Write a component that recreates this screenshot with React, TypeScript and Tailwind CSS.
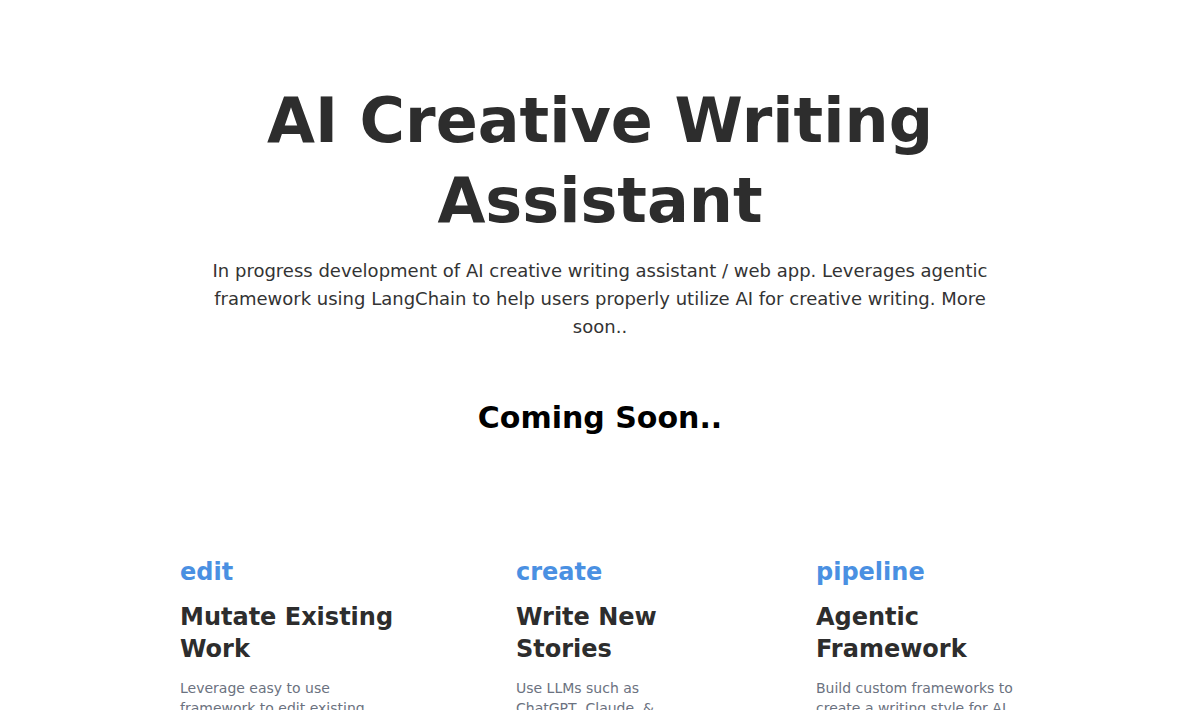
import React from "react";

const cols = [
  {
    label: "edit",
    title: "Mutate Existing Work",
    desc: "Leverage easy to use framework to edit existing work with AI assistance.",
    w: "w-[220px]",
  },
  {
    label: "create",
    title: "Write New Stories",
    desc: "Use LLMs such as ChatGPT, Claude, & Gemini to write brand new stories.",
    w: "w-[184px]",
  },
  {
    label: "pipeline",
    title: "Agentic Framework",
    desc: "Build custom frameworks to create a writing style for AI agents to follow.",
    w: "w-[204px]",
  },
];

export default function App() {
  return (
    <div
      className="min-h-screen bg-white flex flex-col items-center"
      style={{ fontFamily: '"DejaVu Sans", sans-serif' }}
    >
      <h1 className="mt-[81px] text-[62px] leading-[80px] font-bold text-[#2d2d2d] text-center w-[720px]">
        AI Creative Writing Assistant
      </h1>
      <p className="mt-[16px] text-[18px] leading-[28px] text-[#333333] text-center w-[800px]">
        In progress development of AI creative writing assistant / web app. Leverages agentic
        framework using LangChain to help users properly utilize AI for creative writing. More
        soon..
      </p>
      <h2 className="mt-[59px] text-[30px] leading-[36px] font-bold text-black text-center">
        Coming Soon..
      </h2>
      <div className="mt-[120px] w-full px-16 flex justify-evenly">
        {cols.map((c) => (
          <div key={c.label} className={`${c.w} flex flex-col`}>
            <div className="text-[24px] leading-[32px] font-bold text-[#4a90e2]">{c.label}</div>
            <div className="mt-[13px] text-[24px] leading-[32px] font-bold text-[#2d2d2d]">
              {c.title}
            </div>
            <div className="mt-[13px] text-[14px] leading-[20px] text-[#6b7280]">{c.desc}</div>
          </div>
        ))}
      </div>
    </div>
  );
}
